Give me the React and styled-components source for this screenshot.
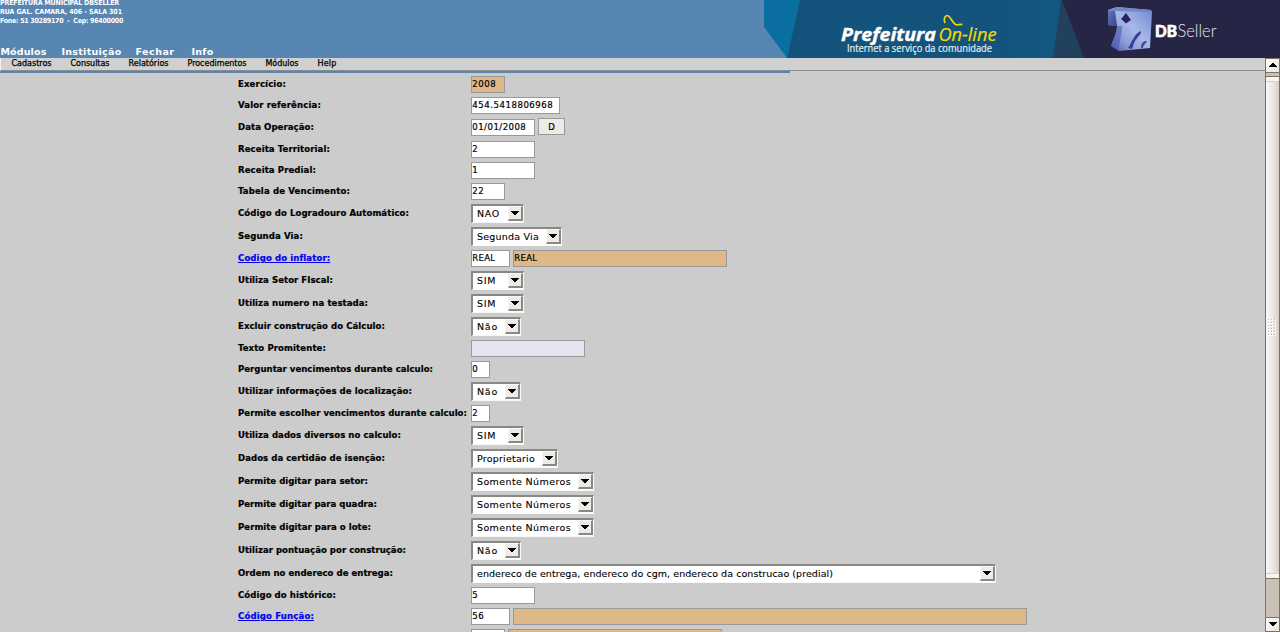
import React, { useLayoutEffect, useRef } from "react";
import styled, { createGlobalStyle, css } from "styled-components";

const Global = createGlobalStyle`
  * { box-sizing: border-box; }
  html, body { margin: 0; height: 100%; overflow: hidden; background: #ccc; }
  body { font-family: "DejaVu Sans", Verdana, sans-serif; color: #000; }
`;

const Page = styled.div`
  width: 1280px;
  height: 632px;
  display: flex;
  flex-direction: column;
  overflow: hidden;
  background: #ccc;
`;

const Header = styled.header`
  flex: none;
  height: 58px;
  display: flex;
  justify-content: space-between;
  background: #5786b2;
  color: #fff;
  overflow: hidden;
`;

const HeaderLeft = styled.div`
  display: flex;
  flex-direction: column;
  justify-content: space-between;
`;

const Address = styled.address`
  font: bold 7px/9px "DejaVu Sans Condensed", "DejaVu Sans", sans-serif;
  margin-top: -1px;
  div { height: 9px; }
`;

const MainMenu = styled.nav`
  display: flex;
  font: bold 9.5px/12px "DejaVu Sans", sans-serif;
`;

const MainItem = styled.a`
  width: ${(p) => p.$w}px;
  margin-left: ${(p) => p.$gap}px;
`;

const SubMenu = styled.nav`
  display: flex;
  height: 13px;
  padding-left: 10.5px;
  background: #d0d0d0;
  border-left: 1px solid #f4f4f4;
  border-bottom: 1px solid #8c8c8c;
  font: 8px/11px "DejaVu Sans", sans-serif;
  -webkit-text-stroke: 0.25px #000;
`;

const SubItem = styled.a`
  width: ${(p) => p.$w}px;
  margin-right: 19px;
`;

const Accent = styled.div`
  width: 790px;
  height: 2px;
  background: #5786b2;
`;

const Body = styled.div`
  flex: 1;
  min-height: 0;
  display: flex;
`;

const Content = styled.main`
  flex: 1;
  min-width: 0;
  overflow: hidden;
`;

const Form = styled.form`
  padding: 3px 0 0 238px;
`;

const Row = styled.div`
  display: grid;
  grid-template-columns: 233px 1fr;
  height: ${(p) => p.$h}px;
`;

const Label = styled.label`
  height: ${(p) => p.$h}px;
  font: bold 9.5px/15px "DejaVu Sans Condensed", "DejaVu Sans", sans-serif;
  line-height: ${(p) => p.$h - 2}px;
  -webkit-text-stroke: 0.2px currentColor;
  ${(p) => p.$link && css`
    color: #00e;
    text-decoration: underline;
    cursor: pointer;
  `}
`;

const Controls = styled.div`
  display: flex;
  align-items: flex-start;
  gap: 3px;
`;

const tones = { white: "#fff", tan: "#deb887", lilac: "#e6e4f1" };

const Field = styled.div`
  width: ${(p) => p.$w}px;
  height: 17px;
  margin-top: ${(p) => p.$drop || 0}px;
  padding-left: 0.3px;
  background: ${(p) => tones[p.$tone || "white"]};
  border: 1px solid #999;
  font: 9.5px/14px "DejaVu Sans Condensed", "DejaVu Sans", sans-serif;
  -webkit-text-stroke: 0.2px #000;
`;

const DateButton = styled.button`
  width: 27px;
  height: 17px;
  padding: 0;
  background: #eeebe7;
  border: 1px solid #999;
  font: 9.5px/14px "DejaVu Sans Condensed", "DejaVu Sans", sans-serif;
  -webkit-text-stroke: 0.2px #000;
  color: #000;
`;

const SelectBox = styled.div`
  width: ${(p) => p.$w}px;
  height: 19px;
  display: flex;
  justify-content: space-between;
  background: #fff;
  border: 2px solid;
  border-color: #888884 #f8f8f8 #f8f8f8 #888884;
  border-width: 2px 1px 1px 2px;
  padding: 0 0 0 4px;
  font: 9.5px/16px "DejaVu Sans", sans-serif;
  -webkit-text-stroke: 0.1px #000;
`;

const Arrow = styled.span`
  width: 15px;
  height: 15px;
  display: flex;
  align-items: center;
  justify-content: center;
  background: #eeebe7;
  border: 1px solid;
  border-color: #f8f8f8 #888884 #888884 #f8f8f8;
  border-width: 1px 2px 2px 1px;
`;

const Scrollbar = styled.aside`
  flex: none;
  width: 15px;
  display: flex;
  flex-direction: column;
  background: #cbc0b6;
  border-left: 1px solid #7c7063;
  border-right: 1px solid #7c7063;
`;

const ScrollButton = styled.div`
  flex: none;
  height: 15px;
  display: flex;
  align-items: center;
  justify-content: center;
  border: solid #7c7063;
  border-width: 1px 0;
  background: linear-gradient(135deg, #fff, #e8e3dd);
`;

const Thumb = styled.div`
  height: 503px;
  margin: 3px 0 auto;
  display: flex;
  flex-direction: column;
  align-items: center;
  justify-content: space-between;
  border: solid #7c7063;
  border-width: 1px 0;
  background: linear-gradient(90deg, #faf8f6, #eae4df 60%, #d7cdc5);
`;

const ThumbCap = styled.div`
  width: 100%;
  height: 5px;
  background: #f8f6f3;
  border: solid #d8d1ca;
  border-width: ${(p) => (p.$end ? "1px 0 0" : "0 0 1px")};
`;

const MainArea = styled.div`
  flex: 1;
  min-width: 0;
  display: flex;
  flex-direction: column;
`;

const FitSpan = styled.span`
  white-space: pre;
`;

// Spreads a run of text over a fixed number of pixels.
function Fit({ w, children }) {
  const ref = useRef(null);
  useLayoutEffect(() => {
    if (!w) return;
    const el = ref.current;
    el.style.letterSpacing = "0px";
    const natural = el.getBoundingClientRect().width;
    el.style.letterSpacing = `${(w - natural) / children.length}px`;
  }, [w, children]);
  return <FitSpan ref={ref}>{children}</FitSpan>;
}

const Triangle = ({ up }) => (
  <svg width="8" height="5" viewBox="0 0 8 5" shapeRendering="crispEdges">
    <path d={up ? "M3 0H5V1H6V2H7V3H8V4H0V3H1V2H2V1H3Z" : "M0 0H8V1H7V2H6V3H5V4H3V3H2V2H1V1H0Z"} />
  </svg>
);

const Grip = () => (
  <svg width="9" height="18" viewBox="0 0 9 18" shapeRendering="crispEdges">
    {[0, 3, 6, 9, 12, 15].map((y) =>
      [0, 3, 6].map((x) => (
        <g key={`${x}-${y}`}>
          <rect x={x} y={y} width="2" height="2" fill="#fff" />
          <rect x={x} y={y} width="1" height="1" fill="#bcb4ac" />
        </g>
      ))
    )}
  </svg>
);

const Banner = () => (
  <svg width="516" height="58" viewBox="764 0 516 58">
    <defs>
      <linearGradient id="sea" x1="0" x2="1">
        <stop offset="0" stopColor="#13537b" />
        <stop offset="0.8" stopColor="#13547d" />
        <stop offset="1" stopColor="#125982" />
      </linearGradient>
      <linearGradient id="cube" x1="0" y1="1" x2="1" y2="0">
        <stop offset="0" stopColor="#4450a8" />
        <stop offset="0.3" stopColor="#8e9dd8" />
        <stop offset="0.55" stopColor="#a9b8e8" />
        <stop offset="1" stopColor="#6c86cc" />
      </linearGradient>
      <linearGradient id="side" x1="0" y1="0" x2="1" y2="1">
        <stop offset="0" stopColor="#6478b8" />
        <stop offset="1" stopColor="#33408c" />
      </linearGradient>
    </defs>
    <path d="M764 0H802L787 58L764 27Z" fill="#0a6fa0" />
    <path d="M800 0H1062L1054 58H787Z" fill="url(#sea)" />
    <path d="M1061 0H1070L1085 58H1053Z" fill="#22415f" />
    <path d="M1062 0H1280V58H1084Z" fill="#262545" />
    <g fontFamily="'Open Sans', 'Noto Sans', sans-serif">
      <text x="841" y="41" fontSize="18.500" fontWeight="700" fontStyle="italic" fill="#fff" stroke="#fff" strokeWidth="0.4" textLength="95" lengthAdjust="spacingAndGlyphs">Prefeitura</text>
      <text x="938.500" y="41" fontSize="18.500" fontStyle="italic" fill="#f1dc00" stroke="#f1dc00" strokeWidth="0.2" textLength="58" lengthAdjust="spacingAndGlyphs">On-line</text>
      <text x="847" y="52" fontSize="10" fill="#e6eff5" stroke="#e6eff5" strokeWidth="0.2" textLength="145" lengthAdjust="spacingAndGlyphs">Internet a serviço da comunidade</text>
    </g>
    <path d="M945 23C943 19 945 15.500 947.500 15.500C950 16 952 22 955.500 24.500C957.500 25.500 959 24 962.500 24.500" fill="none" stroke="#f1dc00" strokeWidth="1.7" />
    <path d="M1108 10L1117 7L1151 10L1152 12L1150 48L1119 51L1111 46C1113 39 1117 33 1117 26L1108 25Z" fill="url(#cube)" />
    <path d="M1108 10L1115 11L1117 26L1108 25Z" fill="url(#side)" />
    <path d="M1108 10L1117 7L1151 10L1150 12L1115 11Z" fill="#7187c7" />
    <path d="M1117 26C1117 34 1113 39 1111 46L1119 51C1119 42 1122 35 1122 26Z" fill="#4b5bb0" opacity="0.6" />
    <path d="M1126 13L1131 20L1126 23.500L1121 19Z" fill="#292466" />
    <path d="M1128 48C1132 42 1134 34 1141 31C1142 34 1136 38 1134 43L1132 49Z" fill="#35409a" />
    <path d="M1141 48C1141 43 1143 41 1147 41C1146 44 1143.500 44 1143 48Z" fill="#3d4c9d" />
    <g fontFamily="Lato, sans-serif" fontSize="18.500">
      <text x="1155" y="37" fontSize="17" fontWeight="900" fill="#fff" stroke="#fff" strokeWidth="0.7" textLength="22" lengthAdjust="spacingAndGlyphs">DB</text>
      <text x="1177.500" y="37" fontWeight="300" fill="#e5e5ee" textLength="39" lengthAdjust="spacingAndGlyphs">Seller</text>
    </g>
  </svg>
);

const text = (w, value = "", fit, tone) => ({ w, value, fit, tone });

const rows = [
  { label: "Exercício:", lw: 48, fields: [text(34, "2008", 24, "tan")] },
  { label: "Valor referência:", lw: 83, fields: [text(89, "454.5418806968", 81)] },
  { label: "Data Operação:", lw: 76, fields: [text(64, "01/01/2008", 54)], date: true },
  { label: "Receita Territorial:", lw: 92, fields: [text(64, "2")] },
  { label: "Receita Predial:", lw: 78, fields: [text(64, "1")] },
  { label: "Tabela de Vencimento:", lw: 112, fields: [text(34, "22", 12)] },
  { label: "Código do Logradouro Automático:", lw: 171, select: "NAO", w: 53, fit: 23 },
  { label: "Segunda Via:", lw: 65, select: "Segunda Via", w: 91, fit: 62 },
  { label: "Codigo do inflator:", lw: 92, link: true, fields: [text(39, "REAL", 23), text(214, "REAL", 23, "tan")] },
  { label: "Utiliza Setor FIscal:", lw: 95, select: "SIM", w: 53, fit: 19 },
  { label: "Utiliza numero na testada:", lw: 130, select: "SIM", w: 53, fit: 19 },
  { label: "Excluir construção do Cálculo:", lw: 147, select: "Não", w: 50, fit: 21 },
  { label: "Texto Promitente:", lw: 88, fields: [text(114, "", 0, "lilac")] },
  { label: "Perguntar vencimentos durante calculo:", lw: 195, fields: [text(19, "0")] },
  { label: "Utilizar informações de localização:", lw: 174, select: "Não", w: 50, fit: 21 },
  { label: "Permite escolher vencimentos durante calculo:", lw: 229, fields: [text(19, "2")] },
  { label: "Utiliza dados diversos no calculo:", lw: 163, select: "SIM", w: 53, fit: 19 },
  { label: "Dados da certidão de isenção:", lw: 147, select: "Proprietario", w: 87, fit: 58 },
  { label: "Permite digitar para setor:", lw: 130, select: "Somente Números", w: 123, fit: 94 },
  { label: "Permite digitar para quadra:", lw: 139, select: "Somente Números", w: 123, fit: 94 },
  { label: "Permite digitar para o lote:", lw: 133, select: "Somente Números", w: 123, fit: 94 },
  { label: "Utilizar pontuação por construção:", lw: 168, select: "Não", w: 50, fit: 21 },
  { label: "Ordem no endereco de entrega:", lw: 155, select: "endereco de entrega, endereco do cgm, endereco da construcao (predial)", w: 525, fit: 356 },
  { label: "Código do histórico:", lw: 98, fields: [text(64, "5")] },
  { label: "Código Função:", lw: 76, link: true, fields: [text(39, "56", 12), text(514, "", 0, "tan")] },
  { label: "", fields: [text(34), text(214, "", 0, "tan")] },
];

const FormRow = ({ row }) => (
  <Row $h={row.select || row.date ? 23 : 21}>
    <Label $h={row.select || row.date ? 19 : 17} $link={row.link}>
      <Fit w={row.lw}>{row.label}</Fit>
    </Label>
    <Controls>
      {row.select && (
        <SelectBox $w={row.w}>
          <Fit w={row.fit}>{row.select}</Fit>
          <Arrow><Triangle /></Arrow>
        </SelectBox>
      )}
      {row.fields?.map((f, i) => (
        <Field key={i} $w={f.w} $tone={f.tone} $drop={row.date ? 1 : 0}>
          <Fit w={f.fit}>{f.value}</Fit>
        </Field>
      ))}
      {row.date && <DateButton type="button">D</DateButton>}
    </Controls>
  </Row>
);

const mainItems = [["Módulos", 46, 0.5], ["Instituição", 60, 15], ["Fechar", 39, 14], ["Info", 22, 17]];
const subItems = [["Cadastros", 40], ["Consultas", 39], ["Relatórios", 40], ["Procedimentos", 59], ["Módulos", 33], ["Help", 19]];

export default function App() {
  return (
    <Page>
      <Global />
      <Header>
        <HeaderLeft>
          <Address>
            <div><Fit w={119}>PREFEITURA MUNICIPAL DBSELLER</Fit></div>
            <div><Fit w={122}>RUA GAL. CAMARA, 406 - SALA 301</Fit></div>
            <div><Fit w={123}>{"Fone: 51 30289170  -  Cep: 96400000"}</Fit></div>
          </Address>
          <MainMenu>
            {mainItems.map(([t, w, gap]) => (
              <MainItem key={t} $w={w} $gap={gap}><Fit w={w}>{t}</Fit></MainItem>
            ))}
          </MainMenu>
        </HeaderLeft>
        <Banner />
      </Header>
      <Body>
        <MainArea>
          <SubMenu>
            {subItems.map(([t, w]) => (
              <SubItem key={t} $w={w}><Fit w={w}>{t}</Fit></SubItem>
            ))}
          </SubMenu>
          <Accent />
          <Content>
            <Form>
              {rows.map((row, i) => <FormRow key={i} row={row} />)}
            </Form>
          </Content>
        </MainArea>
        <Scrollbar>
          <ScrollButton><Triangle up /></ScrollButton>
          <Thumb>
            <ThumbCap />
            <Grip />
            <ThumbCap $end />
          </Thumb>
          <ScrollButton><Triangle /></ScrollButton>
        </Scrollbar>
      </Body>
    </Page>
  );
}
